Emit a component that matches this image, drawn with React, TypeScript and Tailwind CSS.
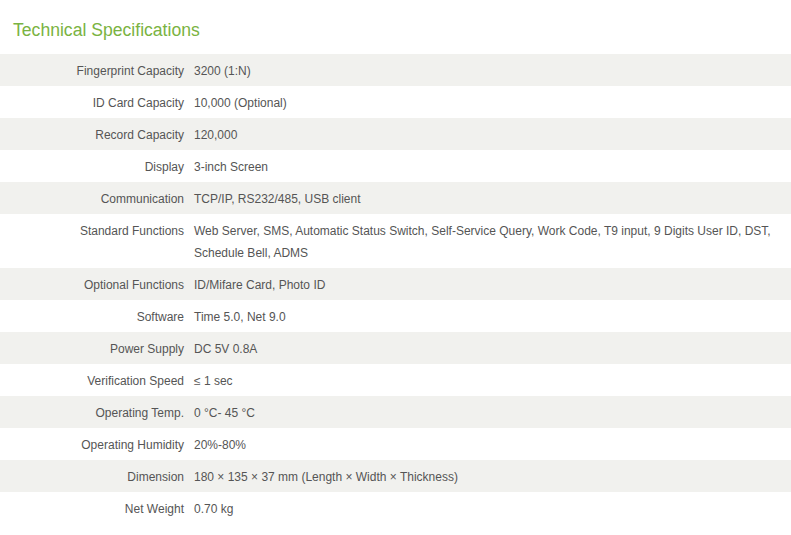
import React from "react";

const rows: [string, string][] = [
  ["Fingerprint Capacity", "3200 (1:N)"],
  ["ID Card Capacity", "10,000 (Optional)"],
  ["Record Capacity", "120,000"],
  ["Display", "3-inch Screen"],
  ["Communication", "TCP/IP, RS232/485, USB client"],
  ["Standard Functions", "Web Server, SMS, Automatic Status Switch, Self-Service Query, Work Code, T9 input, 9 Digits User ID, DST, Schedule Bell, ADMS"],
  ["Optional Functions", "ID/Mifare Card, Photo ID"],
  ["Software", "Time 5.0, Net 9.0"],
  ["Power Supply", "DC 5V 0.8A"],
  ["Verification Speed", "≤ 1 sec"],
  ["Operating Temp.", "0 °C- 45 °C"],
  ["Operating Humidity", "20%-80%"],
  ["Dimension", "180 × 135 × 37 mm (Length × Width × Thickness)"],
  ["Net Weight", "0.70 kg"],
];

export default function App() {
  return (
    <div className="w-[791px] h-[535px] bg-white text-[#555] text-[12px] leading-[22px]" style={{ fontFamily: '"Liberation Sans", Arial, sans-serif' }}>
      <h2 className="pt-[18px] pl-[13px] h-[54px] text-[17.6px] leading-[24px] text-[#7ab342]">Technical Specifications</h2>
      <div className="flex flex-col">
        {rows.map(([k, v], i) => (
          <div key={k} className={`flex pt-[6px] pb-[4px] ${i % 2 === 0 ? "bg-[#f1f1ee]" : "bg-white"}`}>
            <div className="w-[190px] shrink-0 pr-[6px] text-right">{k}</div>
            <div className="pl-[4px] pr-[20px] flex-1">{v}</div>
          </div>
        ))}
      </div>
    </div>
  );
}
